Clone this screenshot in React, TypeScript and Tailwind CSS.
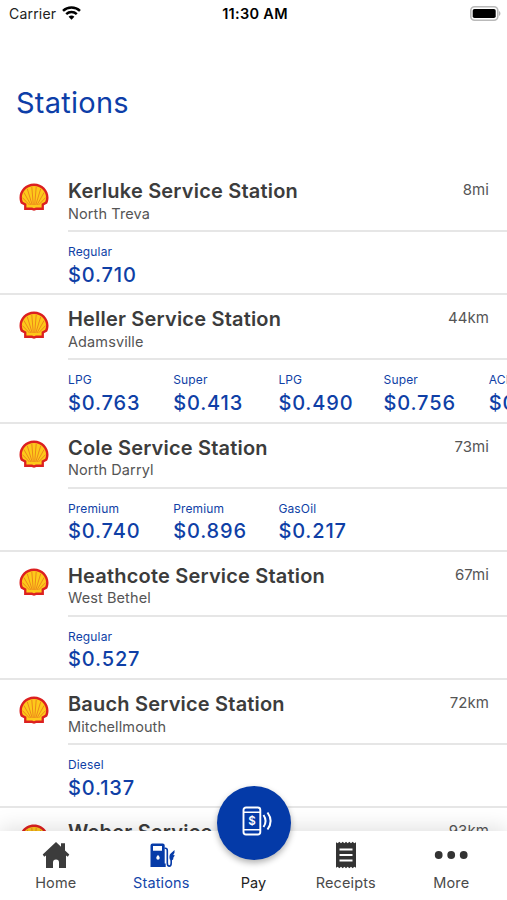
import React from "react";

type Fuel = { label: string; price: string };
type Station = { name: string; city: string; distance: string; fuels: Fuel[] };

const stations: Station[] = [
  { name: "Kerluke Service Station", city: "North Treva", distance: "8mi", fuels: [{ label: "Regular", price: "$0.710" }] },
  {
    name: "Heller Service Station",
    city: "Adamsville",
    distance: "44km",
    fuels: [
      { label: "LPG", price: "$0.763" },
      { label: "Super", price: "$0.413" },
      { label: "LPG", price: "$0.490" },
      { label: "Super", price: "$0.756" },
      { label: "ACPM", price: "$0.512" },
    ],
  },
  {
    name: "Cole Service Station",
    city: "North Darryl",
    distance: "73mi",
    fuels: [
      { label: "Premium", price: "$0.740" },
      { label: "Premium", price: "$0.896" },
      { label: "GasOil", price: "$0.217" },
    ],
  },
  { name: "Heathcote Service Station", city: "West Bethel", distance: "67mi", fuels: [{ label: "Regular", price: "$0.527" }] },
  { name: "Bauch Service Station", city: "Mitchellmouth", distance: "72km", fuels: [{ label: "Diesel", price: "$0.137" }] },
  { name: "Weber Service Station", city: "Lake Ora", distance: "93km", fuels: [] },
];

function ShellLogo() {
  return (
    <svg className="block h-[28px] w-[30px]" viewBox="0 0 30 28">
      <path
        d="M15 .6C6.500 .6.500 7.500.500 14.500c0 2.300.500 4.300 1.300 6.100l3.300 1.700v4.700h7.600L15 27.700l2.300-.7h7.600v-4.700l3.300-1.700c.8-1.800 1.300-3.800 1.300-6.100C29.500 7.500 23.500.6 15 .6Z"
        fill="#dc2020"
      />
      <path
        d="M15 3C8 3 2.900 8.700 2.900 14.400c0 1.600.3 3 .9 4.300l3.600 2v3.900h5.700l1.900.7 1.900-.7h5.700v-3.900l3.600-2c.6-1.300.9-2.700.9-4.300C27.100 8.700 22 3 15 3Z"
        fill="#fdc91a"
      />
      <path
        d="M14.300 22 12.800 4M15.700 22 17.200 4M13.200 22 8.300 5.800M16.800 22 21.700 5.800M12 22 4.900 9.500M18 22 25.100 9.500M10.500 22 3.300 14.500M19.500 22 26.700 14.500"
        stroke="#e8761c"
        strokeWidth=".8"
      />
    </svg>
  );
}

function StationRow({ station }: { station: Station }) {
  return (
    <li className="flex h-[128.300px] shrink-0 border-b-2 border-[#e6e6e6] pt-[12px]">
      <div className="w-[68px] shrink-0 pl-[19px] pt-[4px]">
        <ShellLogo />
      </div>
      <div className="min-w-0 flex-1">
        <div className="flex h-[53px] justify-between border-b-2 border-[#e6e6e6] pr-[18px]">
          <div>
            <h2 className="text-[20px] font-semibold leading-[24.600px] tracking-[0.190px] text-[#3c3c3c]">{station.name}</h2>
            <p className="text-[14.500px] leading-5 tracking-[0.100px] text-[#555]">{station.city}</p>
          </div>
          <span className="text-[15px] leading-[21.500px] tracking-[0.080px] text-[#555]">{station.distance}</span>
        </div>
        <div className="flex overflow-hidden pt-[12px] text-[#0f3fa6]">
          {station.fuels.map((fuel, i) => (
            <div key={i} className="w-[105.200px] shrink-0">
              <div className="text-[12px] leading-4 tracking-[0.150px]">{fuel.label}</div>
              <div className="mt-[2.500px] text-[20px] font-medium leading-[25.500px] tracking-[0.850px]">{fuel.price}</div>
            </div>
          ))}
        </div>
      </div>
    </li>
  );
}

function WifiIcon() {
  return (
    <svg className="-mt-[2px] h-[14px] w-[19px]" viewBox="0 0 19 14" fill="none" stroke="#000" strokeWidth="2.500">
      <path d="M1 4.900C5.700.5 13.300.5 18 4.900" />
      <path d="M4.200 8.200c3-2.800 7.600-2.800 10.600 0" />
      <path d="M9.500 13.700 6.600 10.700c1.700-1.600 4.100-1.600 5.800 0Z" fill="#000" stroke="none" />
    </svg>
  );
}

function BatteryIcon() {
  return (
    <svg className="-mt-[2px] h-[15px] w-[31px]" viewBox="0 0 31 15">
      <rect x=".8" y=".8" width="27" height="13.400" rx="3.800" fill="#fff" stroke="#b9b9b9" strokeWidth="1.600" />
      <rect x="2.700" y="2.900" width="23" height="9.200" rx="1.800" fill="#000" />
      <path d="M29 5v5c1.900-.7 1.900-4.300 0-5Z" fill="#b5b5b5" />
    </svg>
  );
}

function HomeIcon() {
  return (
    <svg className="h-[28px] w-[28px]" viewBox="0 0 28 28" fill="#3c3c3c">
      <path d="M14 1 19 5.700V2.300h4v7.200l4.300 4.100-1.500 2.100-1.800-1.200V27h-7v-5.500a3 3 0 0 0-6 0V27H4V14.500l-1.800 1.200-1.500-2.100Z" />
    </svg>
  );
}

function PumpIcon() {
  return (
    <svg className="h-[28px] w-[28px]" viewBox="0 0 28 28">
      <path
        fillRule="evenodd"
        fill="#063ba8"
        d="M5.500 2.500h10.200a2 2 0 0 1 2 2V22.500h1v3.500H3.500V4.500a2 2 0 0 1 2-2ZM6 5v4.800h9V5Zm5 9c-1.100 1.100-1.700 2-1.700 3a1.700 1.700 0 0 0 3.400 0c0-1-.6-1.900-1.700-3Z"
      />
      <path d="M17.500 7.200h.8c1.500 0 2 .8 2 2.200v12.600c0 4.200 3.900 4.200 3.900 0V19" fill="none" stroke="#063ba8" strokeWidth="1.600" />
      <path d="m27.500 9-3.800 3.500c-1.300 1.200-1.500 3.500-1 5.800l1.400 1.400 2-1.100.4-2.400 1.400-1.600-1.700-.6 1.300-2.200Z" fill="#063ba8" />
    </svg>
  );
}

function ReceiptIcon() {
  return (
    <svg className="h-[28px] w-[22px]" viewBox="0 0 22 28">
      <path
        fill="#333"
        d="M1 1.200 2.700 2.300 4.300.8 6 2.300 7.700.8l1.700 1.500L11 .8l1.700 1.500L14.300.8 16 2.300 17.700.8l1.600 1.500L21 1.200v25.600l-1.700-1.100-1.600 1.500-1.700-1.500-1.700 1.500-1.600-1.500-1.700 1.500-1.600-1.500-1.700 1.500L6 25.700l-1.700 1.500-1.600-1.500L1 26.800Z"
      />
      <path d="M4.500 8.500h13M4.500 14h13M4.500 19.500h13" stroke="#fff" strokeWidth="2" />
    </svg>
  );
}

function MoreIcon() {
  return (
    <svg className="h-[28px] w-[34px]" viewBox="0 0 34 28" fill="#333">
      <circle cx="4.700" cy="14" r="3.900" />
      <circle cx="17.200" cy="14" r="3.900" />
      <circle cx="29.700" cy="14" r="3.900" />
    </svg>
  );
}

function PayIcon() {
  return (
    <svg className="h-[30px] w-[32px]" viewBox="0 0 32 30" fill="none" stroke="#fff">
      <rect x="2.500" y="1.500" width="16.800" height="27" rx="2.500" strokeWidth="1.900" />
      <path d="M2.500 6.200h16.800M2.500 23.700h16.800" strokeWidth="1.600" />
      <path d="M22.500 9c2.600 3.800 2.600 8.200 0 12M26.500 6.500c4 5.500 4 11.500 0 17" strokeWidth="2" />
      <text x="10.900" y="19" textAnchor="middle" fill="#fff" stroke="none" className="text-[11.500px] font-semibold">
        $
      </text>
    </svg>
  );
}

function Tab({ label, icon, active }: { label: string; icon: React.ReactNode; active?: boolean }) {
  return (
    <div className={active ? "flex w-[105.500px] flex-col items-center text-[#1546aa]" : "flex w-[105.500px] flex-col items-center text-[#4a4a4a]"}>
      {icon}
      <span className="mt-[4px] text-[14.500px] leading-5 tracking-[0.130px]">{label}</span>
    </div>
  );
}

export default function App() {
  return (
    <div className="relative flex h-[900px] w-[507px] flex-col overflow-hidden bg-white font-['Inter','Liberation_Sans',sans-serif]">
      <header className="grid h-[28px] shrink-0 grid-cols-3 items-center pl-[9px] pr-[6px] text-black">
        <div className="flex items-center gap-[6px]">
          <span className="-mt-px text-[14px] tracking-[0.200px] text-[#222]">Carrier</span>
          <WifiIcon />
        </div>
        <span className="-mt-px text-center text-[14.500px] font-semibold tracking-[0.300px]">11:30 AM</span>
        <div className="flex justify-end">
          <BatteryIcon />
        </div>
      </header>
      <h1 className="mt-[55px] h-[84px] shrink-0 pl-[16px] text-[29px] leading-[40px] tracking-[0.250px] text-[#0d3ea8]">Stations</h1>
      <ul className="flex min-h-0 flex-1 flex-col overflow-hidden">
        {stations.map((s) => (
          <StationRow key={s.name} station={s} />
        ))}
      </ul>
      <nav className="relative h-[69px] shrink-0 bg-white shadow-[0_-3px_20px_rgba(0,0,0,0.13)]">
        <div className="flex h-full justify-between px-[3px] pt-[10px]">
          <Tab label="Home" icon={<HomeIcon />} />
          <Tab label="Stations" icon={<PumpIcon />} active />
          <div className="flex flex-1 flex-col items-center text-[#222]">
            <span className="mt-[32px] text-[14.500px] leading-5 tracking-[0.130px]">Pay</span>
          </div>
          <Tab label="Receipts" icon={<ReceiptIcon />} />
          <Tab label="More" icon={<MoreIcon />} />
        </div>
        <button className="absolute -top-[45px] left-[217px] flex h-[74px] w-[74px] items-center justify-center rounded-full bg-[#043aa8] pb-[4px] pl-[6px] shadow-[0_3px_6px_rgba(0,0,0,0.3)]">
          <PayIcon />
        </button>
      </nav>
    </div>
  );
}
